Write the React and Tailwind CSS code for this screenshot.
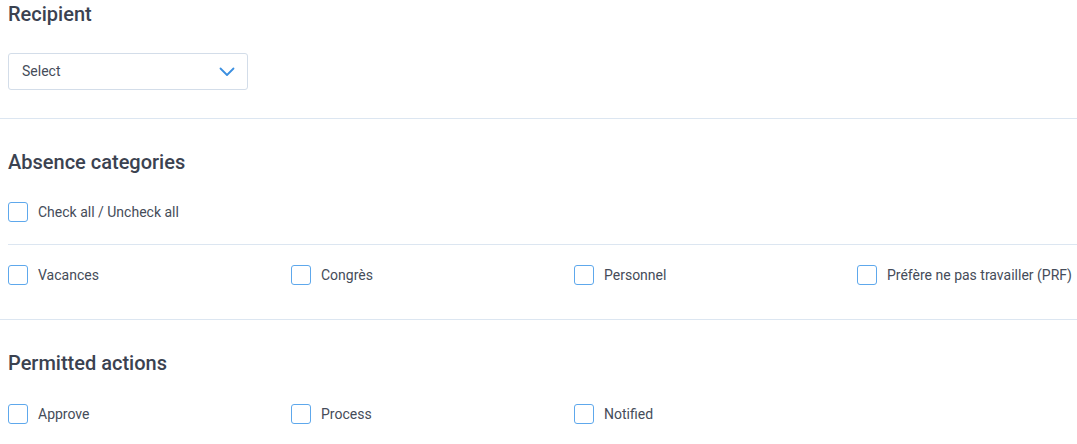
import React from "react";

function Box() {
  return <span className="block w-[20px] h-[20px] rounded-[3px] border border-[#5ea8ec] bg-white shrink-0" />;
}

function Check({ label }) {
  return (
    <label className="flex items-center gap-[10px] h-[20px]">
      <Box />
      <span className="text-[14px] text-[#454c59]">{label}</span>
    </label>
  );
}

export default function App() {
  return (
    <div className="bg-white w-[1077px] h-[444px] overflow-hidden" style={{ fontFamily: "Roboto, 'Liberation Sans', sans-serif" }}>
      <div className="pl-[8px] pb-[28px] border-b border-[#dce6f1]">
        <h2 className="text-[20px] leading-[28px] font-medium text-[#3b4250]">Recipient</h2>
        <div className="mt-[25px] w-[240px] h-[37px] rounded-[3px] border border-[#d3dde9] flex items-center justify-between pl-[13px] pr-[12px]">
          <span className="text-[14px] text-[#454c59]">Select</span>
          <svg width="16" height="10" viewBox="0 0 16 10" fill="none">
            <path d="M1.5 1.5 L8 8 L14.5 1.5" stroke="#3b8fe0" strokeWidth="1.8" strokeLinecap="round" strokeLinejoin="round" />
          </svg>
        </div>
      </div>
      <div className="pl-[8px] pt-[29px] pb-[34px] border-b border-[#dce6f1]">
        <h2 className="text-[20px] leading-[28px] font-medium text-[#3b4250]">Absence categories</h2>
        <div className="mt-[26px] pb-[22px] border-b border-[#dce6f1]">
          <Check label="Check all / Uncheck all" />
        </div>
        <div className="mt-[20px] grid grid-cols-[repeat(4,283px)]">
          <Check label="Vacances" />
          <Check label="Congrès" />
          <Check label="Personnel" />
          <Check label="Préfère ne pas travailler (PRF)" />
        </div>
      </div>
      <div className="pl-[8px] pt-[29px]">
        <h2 className="text-[20px] leading-[28px] font-medium text-[#3b4250]">Permitted actions</h2>
        <div className="mt-[27px] grid grid-cols-[repeat(4,283px)]">
          <Check label="Approve" />
          <Check label="Process" />
          <Check label="Notified" />
        </div>
      </div>
    </div>
  );
}
